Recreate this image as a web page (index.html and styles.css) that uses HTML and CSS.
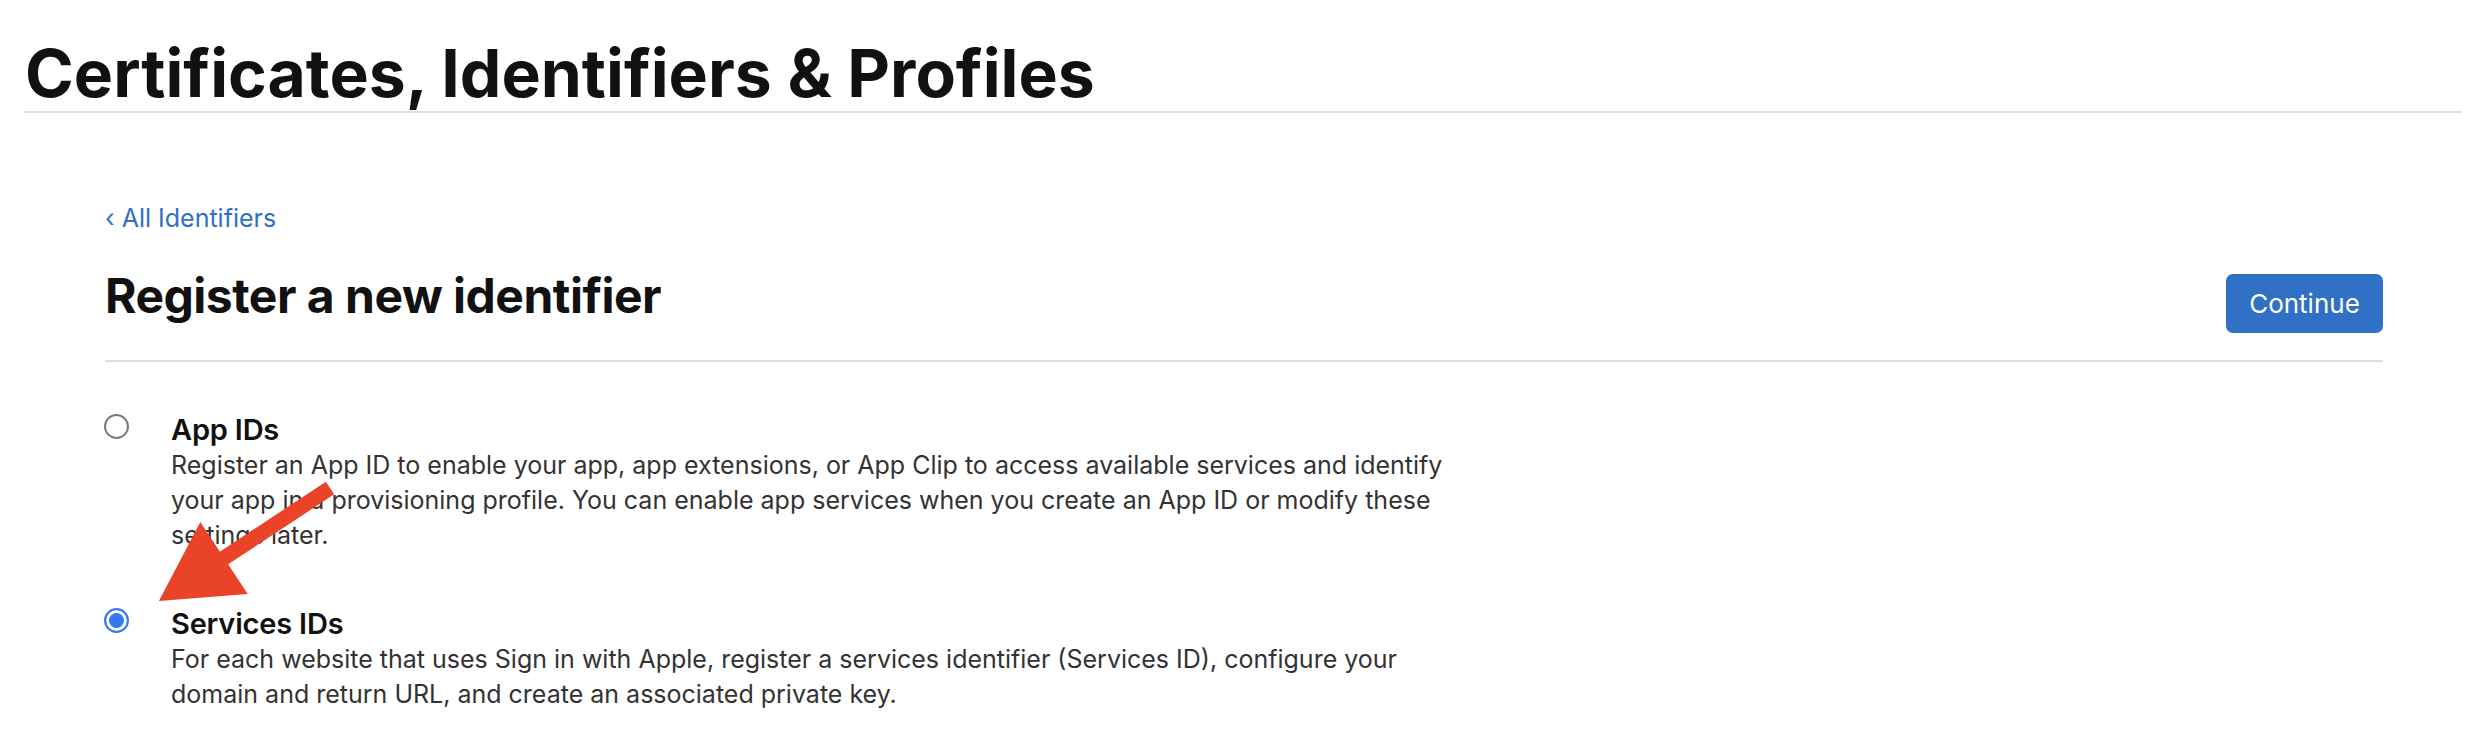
FILE: index.html
```html
<!DOCTYPE html>
<html lang="en">
<head>
<meta charset="utf-8">
<title>Certificates, Identifiers &amp; Profiles</title>
<link rel="stylesheet" href="styles.css">
</head>
<body>
<header class="page-header">
  <h1 class="page-title">Certificates, Identifiers &amp; Profiles</h1>
</header>
<main class="content">
  <a class="back-link" href="#"><span class="chev">‹</span> All Identifiers</a>
  <div class="title-row">
    <h2 class="section-title">Register a new identifier</h2>
    <button class="btn-primary" type="button">Continue</button>
  </div>
  <ul class="options">
    <li class="option">
      <span class="radio"></span>
      <div class="option-body">
        <div class="option-title">App IDs</div>
        <p class="option-desc">Register an App ID to enable your app, app extensions, or App Clip to access available services and identify your app in a provisioning profile. You can enable app services when you create an App ID or modify these settings later.</p>
      </div>
    </li>
    <li class="option">
      <span class="radio checked"></span>
      <div class="option-body">
        <div class="option-title">Services IDs</div>
        <p class="option-desc">For each website that uses Sign in with Apple, register a services identifier (Services ID), configure your domain and return URL, and create an associated private key.</p>
      </div>
    </li>
  </ul>
</main>
<svg class="annotation" width="2478" height="732" viewBox="0 0 2478 732" aria-hidden="true">
  <polygon fill="#e9432a" points="325.9,481.7 334.1,494.3 228.1,564.3 247.7,593.9 158.9,601 200.3,522.1 219.9,551.7"/>
</svg>
</body>
</html>
```
FILE: styles.css
```css
html, body {
  margin: 0;
  padding: 0;
  background: #ffffff;
}
body {
  position: relative;
  font-family: Inter, "Noto Sans", "Liberation Sans", sans-serif;
  color: #1d1d1f;
  width: 2478px;
  height: 732px;
  overflow: hidden;
}
.page-header {
  margin: 0 16px 0 24px;
  padding-top: 37px;
  padding-bottom: 2px;
  border-bottom: 2px solid #e1e1e1;
}
.page-title {
  margin: 0 0 0 1px;
  font-size: 66px;
  line-height: 72px;
  font-weight: 700;
  letter-spacing: 0;
  color: #111111;
}
.content {
  padding: 90px 95px 0 105px;
}
.back-link {
  display: block;
  font-size: 25px;
  line-height: 31px;
  color: #2f70c6;
  text-decoration: none;
}
.title-row {
  display: flex;
  justify-content: space-between;
  align-items: flex-start;
  margin-top: 33px;
  padding-bottom: 27px;
  border-bottom: 2px solid #dedede;
}
.section-title {
  margin: 0;
  font-size: 48px;
  line-height: 58px;
  font-weight: 700;
  letter-spacing: -0.5px;
  color: #111111;
}
.btn-primary {
  margin-top: 7px;
  height: 59px;
  width: 157px;
  padding: 0;
  border: none;
  border-radius: 7px;
  background: #3070c5;
  color: #ffffff;
  font-family: Inter, "Noto Sans", "Liberation Sans", sans-serif;
  font-size: 26px;
  font-weight: 400;
}
.options {
  list-style: none;
  margin: 0;
  padding: 50px 0 0 0;
  display: flex;
  flex-direction: column;
  gap: 53px;
}
.option {
  display: flex;
  align-items: flex-start;
}
.radio {
  flex: none;
  box-sizing: border-box;
  width: 25px;
  height: 25px;
  margin-top: 2px;
  margin-left: -1px;
  margin-right: 42px;
  border: 2px solid #7a7a7a;
  border-radius: 50%;
  background: #ffffff;
}
.radio.checked {
  border-color: #3478f6;
  background: #3478f6;
  box-shadow: inset 0 0 0 3px #ffffff;
}
.option-body {
  width: 1300px;
}
.option-title {
  font-size: 29px;
  line-height: 36px;
  font-weight: 600;
  letter-spacing: -0.2px;
  color: #111111;
}
.option-desc {
  margin: 0;
  font-size: 25px;
  line-height: 35px;
  color: #333333;
}
.annotation {
  position: absolute;
  left: 0;
  top: 0;
  pointer-events: none;
}
```
